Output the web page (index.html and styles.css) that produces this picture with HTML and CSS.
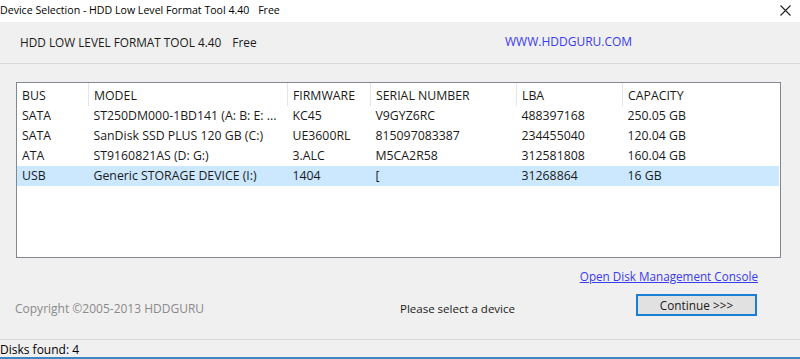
FILE: index.html
```html
<!DOCTYPE html>
<html lang="en">
<head>
  <meta charset="UTF-8" />
  <title>Device Selection - HDD Low Level Format Tool 4.40</title>
  <link rel="stylesheet" href="styles.css">
</head>
<body>
  <div class="titlebar">
    <span class="title">Device Selection - HDD Low Level Format Tool 4.40 <span class="gap">Free</span></span>
    <span class="close">
      <svg width="11" height="11" viewBox="0 0 11 11"><path d="M0.5 0.5 L10.5 10.5 M10.5 0.5 L0.5 10.5" stroke="#222" stroke-width="1.1" fill="none"/></svg>
    </span>
  </div>

  <div class="app-head">
    <span class="app-name">HDD LOW LEVEL FORMAT TOOL 4.40 <span class="gap">Free</span></span>
    <span class="site">WWW.HDDGURU.COM</span>
  </div>

  <div class="content">
    <div class="list">
      <table>
        <thead>
          <tr>
            <th class="c-bus">BUS</th>
            <th class="c-model">MODEL</th>
            <th class="c-fw">FIRMWARE</th>
            <th class="c-sn">SERIAL NUMBER</th>
            <th class="c-lba">LBA</th>
            <th class="c-cap">CAPACITY</th>
          </tr>
        </thead>
        <tbody>
          <tr>
            <td>SATA</td><td>ST250DM000-1BD141 (A: B: E: ...</td><td>KC45</td><td>V9GYZ6RC</td><td>488397168</td><td>250.05 GB</td>
          </tr>
          <tr>
            <td>SATA</td><td>SanDisk SSD PLUS 120 GB (C:)</td><td>UE3600RL</td><td>815097083387</td><td>234455040</td><td>120.04 GB</td>
          </tr>
          <tr>
            <td>ATA</td><td>ST9160821AS (D: G:)</td><td>3.ALC</td><td>M5CA2R58</td><td>312581808</td><td>160.04 GB</td>
          </tr>
          <tr class="selected">
            <td>USB</td><td>Generic STORAGE DEVICE (I:)</td><td>1404</td><td>[</td><td>31268864</td><td>16 GB</td>
          </tr>
        </tbody>
      </table>
    </div>

    <div class="link-row">
      <a class="console-link" href="#">Open Disk Management Console</a>
    </div>

    <div class="action-row">
      <span class="copyright">Copyright &copy;2005-2013 HDDGURU</span>
      <span class="hint">Please select a device</span>
      <button class="continue">Continue &gt;&gt;&gt;</button>
    </div>
  </div>

  <div class="statusbar">Disks found: 4</div>
</body>
</html>
```

FILE: styles.css
```css
html, body {
  margin: 0;
  padding: 0;
}

body {
  width: 800px;
  height: 359px;
  overflow: hidden;
  background: #f0f0f0;
  font-family: "Open Sans", "Noto Sans", sans-serif;
  font-size: 12px;
  color: #1a1a1a;
  display: flex;
  flex-direction: column;
}

.titlebar {
  height: 22px;
  background: #fff;
  display: flex;
  align-items: center;
  justify-content: space-between;
  padding: 0 9px 0 0;
}

.title {
  font-size: 10.6px;
  color: #000;
  margin-top: -3px;
}

.title .gap {
  margin-left: 6px;
}

.close {
  display: flex;
  margin-top: -2px;
}

.app-head {
  height: 42px;
  display: flex;
  align-items: center;
  padding-left: 20px;
  border-bottom: 1px solid #d9d9d9;
  box-sizing: border-box;
}

.app-name {
  font-size: 11.8px;
  color: #1a1a1a;
  width: 485px;
  margin-top: -2px;
}

.app-name .gap {
  margin-left: 8px;
}

.site {
  font-size: 12px;
  color: #3a3af0;
  margin-top: -2px;
}

.content {
  flex: 1;
  padding: 18px 19px 0 16px;
}

.list {
  height: 174px;
  background: #fff;
  border: 1px solid #828790;
}

table {
  border-collapse: collapse;
  table-layout: fixed;
  width: 762px;
  font-size: 12.3px;
}

th {
  font-weight: normal;
  text-align: left;
  height: 22px;
  padding: 1px 0 0 5px;
  border-right: 1px solid #e5e5e5;
}

th:last-child {
  border-right: none;
}

td {
  height: 20px;
  line-height: 16px;
  padding: 0 0 0 5px;
  white-space: nowrap;
  overflow: hidden;
}

.c-bus { width: 66px; }
.c-model { width: 193px; }
.c-fw { width: 77px; }
.c-sn { width: 140px; }
.c-lba { width: 100px; }

tr.selected td {
  background: #cce8ff;
}

.link-row {
  display: flex;
  justify-content: flex-end;
  padding: 10px 23px 0 0;
}

.console-link {
  color: #3a3af0;
  font-size: 11.7px;
  text-decoration: underline;
}

.action-row {
  display: grid;
  grid-template-columns: 385px 236px 121px;
  align-items: center;
  margin-top: 8px;
  margin-left: -1px;
}

.copyright {
  color: #8a8a8a;
  font-size: 12px;
  margin-top: 8px;
}

.hint {
  font-size: 11.5px;
  color: #1a1a1a;
  margin-top: 8px;
}

.continue {
  height: 22px;
  font-family: "Open Sans", "Noto Sans", sans-serif;
  font-size: 11.8px;
  color: #1a1a1a;
  background: #e1e1e1;
  border: 2px solid #1a7fd4;
  padding: 0;
}

.statusbar {
  height: 16px;
  padding-top: 1px;
  border-top: 1px solid #d7d7d7;
  border-bottom: 2px solid #3d88c4;
  font-size: 12px;
  color: #000;
  line-height: 17px;
}
```
